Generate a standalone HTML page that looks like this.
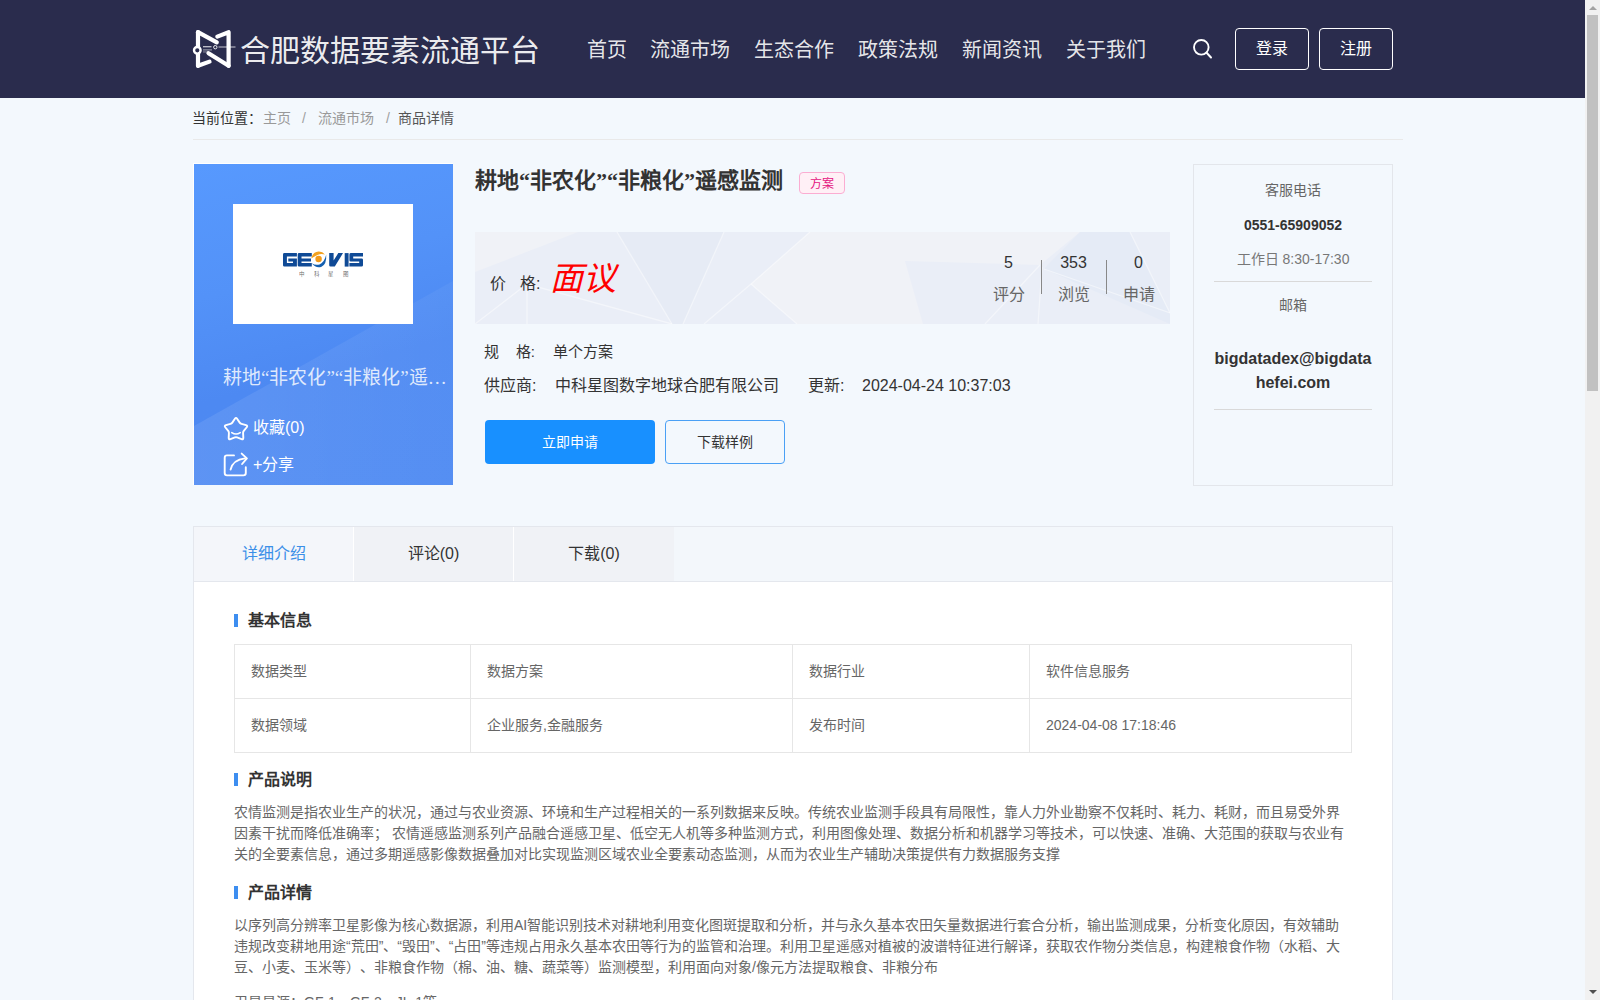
<!DOCTYPE html>
<html lang="zh-CN">
<head>
<meta charset="utf-8">
<style>
html,body{margin:0;padding:0;width:1600px;height:1000px;overflow:hidden;}
body{background:#f3f8fd;font-family:"Liberation Sans",sans-serif;color:#333;position:relative;}
.abs{position:absolute;}
.serif{font-family:"Liberation Serif",serif;}
#hdr{left:0;top:0;width:1585px;height:98px;background:#2a2c4d;}
.nav{top:36px;font-size:20px;color:rgba(255,255,255,0.9);line-height:28px;white-space:nowrap;}
.hbtn{top:28px;width:72px;height:40px;border:1px solid #fff;border-radius:4px;color:#fff;font-size:16px;line-height:40px;text-align:center;}
#sb{left:1585px;top:0;width:15px;height:1000px;background:#f1f1f1;}
.stat{font-size:16px;line-height:28px;text-align:center;color:#333}
.statl{font-size:16px;line-height:28px;text-align:center;color:#666}
.rc{font-size:14px;line-height:22px;white-space:nowrap}
.tab{top:0;height:54px;font-size:16px;line-height:54px;text-align:center;color:#333}
.h3{font-size:16px;line-height:26px;font-weight:bold;color:#333;white-space:nowrap}
.tl{background:#e6e6e6}
.td{font-size:14px;line-height:22px;color:#666;white-space:nowrap}
.para{font-size:14px;line-height:21px;color:#666;white-space:nowrap;text-spacing-trim:space-all}
.bc{top:108px;font-size:14px;line-height:20px;white-space:nowrap;}
</style>
</head>
<body>
<div id="hdr" class="abs">
  <svg class="abs" style="left:190px;top:26px" width="48" height="46" viewBox="190 26 48 46">
    <g stroke="#fff" stroke-width="4.2" stroke-linecap="round" stroke-linejoin="round" fill="none">
      <path d="M198 32.2 L198 65.8"/>
      <path d="M198 32.2 L216.8 42.3"/>
      <path d="M217.3 36.6 L228.6 32.2 L228.6 65.8"/>
      <path d="M208.5 53.2 L228.6 65.8"/>
      <path d="M198 65.8 L209.5 61.6"/>
    </g>
    <circle cx="197.3" cy="50.3" r="3.3" fill="#2a2c4d" stroke="#fff" stroke-width="2.4"/>
    <g fill="#fff"><rect x="203" y="46.2" width="8.5" height="1.1" fill-opacity="0.85"/><rect x="203" y="49.4" width="9" height="1" fill-opacity="0.6"/><rect x="203" y="51.5" width="5" height="0.9" fill-opacity="0.5"/>
    <circle cx="215.3" cy="47.2" r="1.7" fill="none" stroke="#fff" stroke-width="0.9"/><rect x="218.5" y="46.5" width="17" height="1" fill-opacity="0.75"/></g>
  </svg>
  <div class="abs serif" style="left:240px;top:31px;font-size:30px;line-height:40px;color:rgba(255,255,255,0.93);white-space:nowrap">合肥数据要素流通平台</div>
  <div class="abs nav serif" style="left:587px">首页</div>
  <div class="abs nav serif" style="left:650px">流通市场</div>
  <div class="abs nav serif" style="left:754px">生态合作</div>
  <div class="abs nav serif" style="left:858px">政策法规</div>
  <div class="abs nav serif" style="left:962px">新闻资讯</div>
  <div class="abs nav serif" style="left:1066px">关于我们</div>
  <svg class="abs" style="left:1190px;top:36px" width="26" height="26" viewBox="0 0 26 26">
    <circle cx="11.3" cy="11.3" r="7.3" stroke="#fff" stroke-width="1.9" fill="none"/>
    <path d="M16.6 16.8 L21 21.5" stroke="#fff" stroke-width="2" stroke-linecap="round"/>
  </svg>
  <div class="abs hbtn" style="left:1235px">登录</div>
  <div class="abs hbtn" style="left:1319px">注册</div>
</div>

<div class="abs bc" style="left:192px;color:#333">当前位置：</div>
<div class="abs bc" style="left:263px;color:#999">主页</div>
<div class="abs bc" style="left:302px;color:#a0a0a0">/</div>
<div class="abs bc" style="left:318px;color:#999">流通市场</div>
<div class="abs bc" style="left:386px;color:#a0a0a0">/</div>
<div class="abs bc" style="left:398px;color:#555">商品详情</div>
<div class="abs" style="left:193px;top:139px;width:1210px;height:1px;background:#e9e9e9"></div>


<!-- left card -->
<div class="abs" style="left:193px;top:163px;width:260px;height:322px;background:#fff"></div>
<div class="abs" style="left:194px;top:164px;width:259px;height:321px;overflow:hidden;background:linear-gradient(165deg,#5799fe 0%,#5392f8 35%,#4d89f2 62%,#4e8af2 100%)">
  <svg class="abs" style="left:0;top:0" width="259" height="321">
    <defs><linearGradient id="lg1" x1="0" y1="0" x2="1" y2="0"><stop offset="0" stop-color="#fff" stop-opacity="0.09"/><stop offset="1" stop-color="#fff" stop-opacity="0.04"/></linearGradient></defs>
    <polygon points="0,262 259,117 259,321 0,321" fill="url(#lg1)"/>
  </svg>
  <div class="abs" style="left:39px;top:40px;width:180px;height:120px;background:#fff"></div>
  <svg class="abs" style="left:82px;top:80px" width="94" height="36" viewBox="0 0 94 36">
    <g fill="#0f4a96">
      <path d="M8.4 9.1 H20.9 V12.6 H10.9 V19.1 H17 V17.6 H12.3 V14.4 H20.9 V22.6 H8.4 Q7 22.6 7 21.2 V10.5 Q7 9.1 8.4 9.1 Z"/>
      <path d="M23.1 9.1 H35.8 V12.6 H25.5 V14.4 H35 V17.6 H25.5 V19.1 H35.8 V22.6 H23.1 Q21.7 22.6 21.7 21.2 V10.5 Q21.7 9.1 23.1 9.1 Z"/>
      <path d="M53.2 9.1 H57.6 V16.5 L62.3 9.1 H67 L58.8 22.6 H54.6 Q53.2 22.6 53.2 21.2 Z"/>
      <rect x="68.7" y="9.1" width="3.9" height="13.5"/>
      <path d="M75 9.1 H87 V12.6 H77.2 V14.4 H85.6 Q87 14.4 87 15.8 V21.2 Q87 22.6 85.6 22.6 H73.4 V19.1 H83.2 V17.6 H74.8 Q73.4 17.6 73.4 16.2 V10.5 Q73.4 9.1 75 9.1 Z"/>
      <path d="M35.8 19.2 Q40 24.8 45.5 22.8 Q50.8 20.5 50.2 10.6 Q48.5 18.5 43.5 20.4 Q39 21.4 35.8 19.2 Z" fill="#1560b0"/>
    </g>
    <path d="M35.2 14.6 Q36.5 8.2 42.5 7.6 Q46.5 7.4 48.9 10.4 Q45 9.3 41.5 10.9 Q38 12.5 35.2 14.6 Z" fill="#f3a21f"/>
    <circle cx="42.6" cy="15" r="3.2" fill="#f29a1a"/>
    <text x="23" y="31.8" font-family="Liberation Sans" font-size="5.5" fill="#444" fill-opacity="0.8" letter-spacing="8.6">中科星图</text>
  </svg>
  <div class="abs serif" style="left:29px;top:199px;font-size:19px;line-height:30px;color:rgba(255,255,255,0.82);white-space:nowrap">耕地“非农化”“非粮化”遥…</div>
  <svg class="abs" style="left:28px;top:250px" width="28" height="28" viewBox="0 0 28 28">
    <path d="M12.91 4.65 Q14.00 3.00 15.09 4.65 L17.70 8.62 Q18.35 9.61 19.49 9.93 L24.07 11.18 Q25.98 11.71 24.75 13.25 L21.78 16.96 Q21.04 17.89 21.09 19.07 L21.31 23.82 Q21.41 25.79 19.55 25.10 L15.11 23.42 Q14.00 23.00 12.89 23.42 L8.45 25.10 Q6.59 25.79 6.69 23.82 L6.91 19.07 Q6.96 17.89 6.22 16.96 L3.25 13.25 Q2.02 11.71 3.93 11.18 L8.51 9.93 Q9.65 9.61 10.30 8.62 Z" fill="none" stroke="#fff" stroke-width="1.9" stroke-linejoin="round"/>
    <path d="M9.8 18.6 Q14 21.4 18.2 18.6" fill="none" stroke="#fff" stroke-width="1.7" stroke-linecap="round"/>
  </svg>
  <div class="abs" style="left:59px;top:253px;font-size:16px;line-height:22px;color:#fff;white-space:nowrap">收藏(0)</div>
  <svg class="abs" style="left:28px;top:287px" width="28" height="28" viewBox="0 0 28 28">
    <path d="M12 4.4 H5 Q2.7 4.4 2.7 6.7 V22.1 Q2.7 24.4 5 24.4 H21.5 Q23.8 24.4 23.8 22.1 V16.3" fill="none" stroke="#fff" stroke-width="1.9" stroke-linecap="round"/>
    <path d="M8.6 18.5 Q11 8.8 22.9 7.4" fill="none" stroke="#fff" stroke-width="1.9" stroke-linecap="round"/>
    <path d="M19.7 2.6 L24.9 7.4 L20.1 13" fill="none" stroke="#fff" stroke-width="1.9" stroke-linecap="round" stroke-linejoin="round"/>
  </svg>
  <div class="abs" style="left:59px;top:290px;font-size:16px;line-height:22px;color:#fff;white-space:nowrap">+分享</div>
</div>

<!-- middle -->
<div class="abs serif" style="left:475px;top:165px;font-size:22px;line-height:32px;font-weight:bold;color:#333;white-space:nowrap">耕地“非农化”“非粮化”遥感监测</div>
<div class="abs" style="left:799px;top:172px;width:44px;height:20px;border:1px solid #fbadd2;background:#fff0f6;border-radius:4px;color:#e4157f;font-size:12px;line-height:23px;text-align:center">方案</div>

<div class="abs" style="left:475px;top:232px;width:695px;height:92px;background:#f0f2f7;overflow:hidden">
  <svg class="abs" style="left:0;top:0" width="695" height="92">
    <polygon points="0,40 103,0 335,0 276,52 322,92 0,92" fill="#eaeef7"/>
    <polygon points="142,0 249,0 208,92 197,92" fill="#e6ebf5"/>
    <polygon points="430,29 565,33 605,0 695,0 695,92 448,92" fill="#eaeef7"/>
    <polygon points="605,0 655,0 695,81 695,92 569,37" fill="#e5ebf6"/>
    <g stroke="#ffffff" stroke-opacity="0.45" stroke-width="1.3" fill="none">
      <path d="M142 0 L197 92"/>
      <path d="M249 0 L208 92"/>
      <path d="M335 0 L276 52 L229 92"/>
      <path d="M276 52 L322 92"/>
      <path d="M0 92 L52 52 L197 92"/>
      <path d="M52 52 L52 92"/>
      <path d="M565 33 L510 92"/>
      <path d="M569 37 L695 81"/>
      <path d="M655 0 L695 81"/>
      <path d="M567 35 L563 92"/>
    </g>
  </svg>
  <div class="abs" style="left:15px;top:41px;font-size:16px;line-height:22px;color:#333;white-space:nowrap">价</div>
  <div class="abs" style="left:45px;top:41px;font-size:16px;line-height:22px;color:#333;white-space:nowrap">格:</div>
  <div class="abs serif" style="left:75px;top:26px;font-size:33px;line-height:43px;color:#f00;font-style:italic;white-space:nowrap">面议</div>
  <div class="abs stat" style="left:501px;top:17px;width:65px">5</div>
  <div class="abs stat" style="left:566px;top:17px;width:65px">353</div>
  <div class="abs stat" style="left:631px;top:17px;width:65px">0</div>
  <div class="abs statl" style="left:501px;top:49px;width:65px">评分</div>
  <div class="abs statl" style="left:566px;top:49px;width:65px">浏览</div>
  <div class="abs statl" style="left:631px;top:49px;width:65px">申请</div>
  <div class="abs" style="left:566px;top:28px;width:1px;height:34px;background:#888"></div>
  <div class="abs" style="left:631px;top:28px;width:1px;height:34px;background:#888"></div>
</div>

<div class="abs" style="left:484px;top:341px;font-size:15px;line-height:22px;color:#333;white-space:nowrap">规&nbsp;&nbsp;&nbsp;&nbsp;格:</div>
<div class="abs" style="left:553px;top:341px;font-size:15px;line-height:22px;color:#333;white-space:nowrap">单个方案</div>
<div class="abs" style="left:484px;top:375px;font-size:16px;line-height:22px;color:#333;white-space:nowrap">供应商:</div>
<div class="abs" style="left:555px;top:375px;font-size:16px;line-height:22px;color:#333;white-space:nowrap">中科星图数字地球合肥有限公司</div>
<div class="abs" style="left:808px;top:375px;font-size:16px;line-height:22px;color:#333;white-space:nowrap">更新:</div>
<div class="abs" style="left:862px;top:375px;font-size:16px;line-height:22px;color:#333;white-space:nowrap">2024-04-24 10:37:03</div>

<div class="abs" style="left:485px;top:420px;width:170px;height:44px;background:#1890ff;border-radius:4px;color:#fff;font-size:14px;line-height:44px;text-align:center">立即申请</div>
<div class="abs" style="left:665px;top:420px;width:118px;height:42px;border:1px solid #4aa0f5;border-radius:4px;color:#333;font-size:14px;line-height:42px;text-align:center">下载样例</div>

<!-- right card -->
<div class="abs" style="left:1193px;top:164px;width:198px;height:320px;border:1px solid #e3e6eb;text-align:center">
  <div class="abs rc" style="left:0;top:13.5px;width:198px;color:#666">客服电话</div>
  <div class="abs rc" style="left:0;top:49px;width:198px;color:#333;font-weight:bold">0551-65909052</div>
  <div class="abs rc" style="left:0;top:83px;width:198px;color:#777">工作日 8:30-17:30</div>
  <div class="abs" style="left:20px;top:116px;width:158px;height:1px;background:#d9d9d9"></div>
  <div class="abs rc" style="left:0;top:129px;width:198px;color:#666">邮箱</div>
  <div class="abs" style="left:0;top:182px;width:198px;font-size:16px;line-height:24px;font-weight:bold;color:#333;white-space:nowrap">bigdatadex@bigdata<br>hefei.com</div>
  <div class="abs" style="left:20px;top:244px;width:158px;height:1px;background:#d9d9d9"></div>
</div>

<!-- tabs -->
<div class="abs" style="left:193px;top:526px;width:1198px;height:480px;border:1px solid #e4e7ed;background:#fff">
  <div class="abs" style="left:0;top:0;width:1198px;height:54px;background:#f3f7fb;border-bottom:1px solid #e4e7ed"></div>
  <div class="abs tab" style="left:0;width:159px;background:#f4f6fa;color:#3b8fe8">详细介绍</div>
  <div class="abs" style="left:159px;top:0;width:1px;height:54px;background:#fff"></div>
  <div class="abs tab" style="left:160px;width:159px;background:#f0f2f6">评论(0)</div>
  <div class="abs" style="left:319px;top:0;width:1px;height:54px;background:#fff"></div>
  <div class="abs tab" style="left:320px;width:160px;background:#f0f2f6">下载(0)</div>

  <div class="abs" style="left:40px;top:87px;width:4px;height:13px;background:#3d8ef0"></div>
  <div class="abs h3" style="left:54px;top:81px">基本信息</div>

  <div class="abs tl" style="left:40px;top:117px;width:1px;height:109px"></div>
  <div class="abs tl" style="left:276px;top:117px;width:1px;height:109px"></div>
  <div class="abs tl" style="left:598px;top:117px;width:1px;height:109px"></div>
  <div class="abs tl" style="left:835px;top:117px;width:1px;height:109px"></div>
  <div class="abs tl" style="left:1157px;top:117px;width:1px;height:109px"></div>
  <div class="abs tl" style="left:40px;top:117px;width:1118px;height:1px"></div>
  <div class="abs tl" style="left:40px;top:171px;width:1118px;height:1px"></div>
  <div class="abs tl" style="left:40px;top:225px;width:1118px;height:1px"></div>
  <div class="abs td" style="left:57px;top:133px">数据类型</div>
  <div class="abs td" style="left:293px;top:133px">数据方案</div>
  <div class="abs td" style="left:615px;top:133px">数据行业</div>
  <div class="abs td" style="left:852px;top:133px">软件信息服务</div>
  <div class="abs td" style="left:57px;top:187px">数据领域</div>
  <div class="abs td" style="left:293px;top:187px">企业服务,金融服务</div>
  <div class="abs td" style="left:615px;top:187px">发布时间</div>
  <div class="abs td" style="left:852px;top:187px">2024-04-08 17:18:46</div>

  <div class="abs" style="left:40px;top:246px;width:4px;height:13px;background:#3d8ef0"></div>
  <div class="abs h3" style="left:54px;top:240px">产品说明</div>
  <div class="abs para" style="left:40px;top:275px">农情监测是指农业生产的状况，通过与农业资源、环境和生产过程相关的一系列数据来反映。传统农业监测手段具有局限性，靠人力外业勘察不仅耗时、耗力、耗财，而且易受外界<br>因素干扰而降低准确率；&nbsp;农情遥感监测系列产品融合遥感卫星、低空无人机等多种监测方式，利用图像处理、数据分析和机器学习等技术，可以快速、准确、大范围的获取与农业有<br>关的全要素信息，通过多期遥感影像数据叠加对比实现监测区域农业全要素动态监测，从而为农业生产辅助决策提供有力数据服务支撑</div>

  <div class="abs" style="left:40px;top:359px;width:4px;height:13px;background:#3d8ef0"></div>
  <div class="abs h3" style="left:54px;top:353px">产品详情</div>
  <div class="abs para" style="left:40px;top:388px">以序列高分辨率卫星影像为核心数据源，利用AI智能识别技术对耕地利用变化图斑提取和分析，并与永久基本农田矢量数据进行套合分析，输出监测成果，分析变化原因，有效辅助<br>违规改变耕地用途“荒田”、“毁田”、“占田”等违规占用永久基本农田等行为的监管和治理。利用卫星遥感对植被的波谱特征进行解译，获取农作物分类信息，构建粮食作物（水稻、大<br>豆、小麦、玉米等）、非粮食作物（棉、油、糖、蔬菜等）监测模型，利用面向对象/像元方法提取粮食、非粮分布</div>
  <div class="abs para" style="left:40px;top:465px">卫星星源：GF-1、GF-2、JL-1等</div>
</div>

<div id="sb" class="abs">
  <div class="abs" style="left:2px;top:15px;width:11px;height:376px;background:#c1c1c1"></div>
  <div class="abs" style="left:3.5px;top:6px;width:0;height:0;border-left:4.5px solid transparent;border-right:4.5px solid transparent;border-bottom:4px solid #a3a3a3"></div>
  <div class="abs" style="left:3.5px;top:990px;width:0;height:0;border-left:4.5px solid transparent;border-right:4.5px solid transparent;border-top:4px solid #505050"></div>
</div>
</body>
</html>
